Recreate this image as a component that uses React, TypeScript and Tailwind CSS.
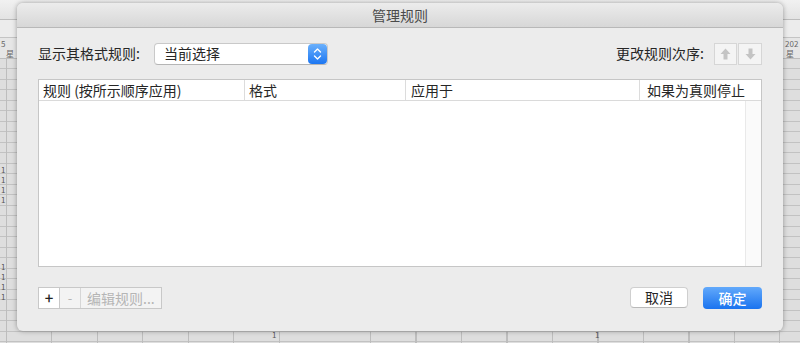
import React from "react";

const ArrowUp = () => (
  <svg width="11" height="12" viewBox="0 0 11 12">
    <path d="M5.5 0.5 L10.5 6 L7.5 6 L7.5 11.5 L3.5 11.5 L3.5 6 L0.5 6 Z" fill="#c4c4c4" />
  </svg>
);
const ArrowDown = () => (
  <svg width="11" height="12" viewBox="0 0 11 12">
    <path d="M5.5 11.5 L10.5 6 L7.5 6 L7.5 0.5 L3.5 0.5 L3.5 6 L0.5 6 Z" fill="#c4c4c4" />
  </svg>
);

const Stepper = () => (
  <div className="w-[19px] h-[20px] rounded-[4px] bg-[linear-gradient(to_bottom,#6ab0fc,#1c76f2)] flex items-center justify-center">
    <svg width="9" height="14" viewBox="0 0 9 14">
      <path d="M1.5 5 L4.5 2 L7.5 5" stroke="white" strokeWidth="1.4" fill="none" strokeLinecap="round" strokeLinejoin="round" />
      <path d="M1.5 9 L4.5 12 L7.5 9" stroke="white" strokeWidth="1.4" fill="none" strokeLinecap="round" strokeLinejoin="round" />
    </svg>
  </div>
);

export default function App() {
  const leftOnes = [167, 177, 187, 197, 264, 274, 284, 294];
  return (
    <div className="relative w-[800px] h-[343px] overflow-hidden bg-[#e2e2e2] font-[family-name:'Noto_Sans_CJK_SC','Liberation_Sans',sans-serif]">
      {/* background spreadsheet */}
      <div className="flex flex-col h-full">
        <div className="h-[20px] bg-[linear-gradient(to_bottom,#f1f1f1,#e3e3e3)] border-b border-[#bcbcbc]" />
        <div className="h-[18px] bg-[#ececec] border-b border-[#c4c4c4]" />
        <div className="relative h-[21px] bg-[#e6e6e6] border-b border-[#bdbdbd] text-[8px] leading-[9px] text-[#666]">
          <span className="absolute left-[1px] top-[1px]">5</span>
          <span className="absolute left-[6px] top-[11px]">星</span>
          <span className="absolute left-[785px] top-[1px]">202</span>
          <span className="absolute left-[786px] top-[11px]">星</span>
        </div>
        <div className="relative flex-1 bg-[#dedede] bg-[repeating-linear-gradient(to_bottom,transparent_0px,transparent_9.5px,#c2c2c2_9.5px,#c2c2c2_10.5px)]">
          <div className="absolute inset-0 bg-[repeating-linear-gradient(to_right,transparent_0px,transparent_6px,#bdbdbd_6px,#bdbdbd_7px,transparent_7px,transparent_45.5px)]" />
          {leftOnes.map((y) => (
            <span key={y} className="absolute left-[1px] text-[8px] leading-[8px] text-[#555]" style={{ top: y - 60 }}>
              1
            </span>
          ))}
          <span className="absolute left-[272px] top-[272px] text-[8px] leading-[8px] text-[#555]">1</span>
          <span className="absolute left-[595px] top-[272px] text-[8px] leading-[8px] text-[#555]">1</span>
        </div>
      </div>

      {/* dialog */}
      <div className="absolute left-[17px] top-[3px] w-[766px] h-[328px] rounded-[6px] overflow-hidden bg-[#ececec] shadow-[0_0_5px_rgba(0,0,0,0.35)] flex flex-col">
        <div className="h-[25px] shrink-0 bg-[linear-gradient(to_bottom,#ececec,#d7d7d7)] border-b border-[#b8b8b8] flex items-center justify-center text-[14px] text-[#4a4a4a]">
          管理规则
        </div>
        <div className="flex-1 flex flex-col px-[21px] pt-[14px] text-[14px] text-[#262626]">
          <div className="h-[23px] flex items-center">
            <div className="flex items-center gap-[14px]">
              <span>显示其格式规则:</span>
              <div className="w-[174px] h-[22px] rounded-[4px] bg-white border border-[#c9c9c9] border-b-[#b5b5b5] flex items-center justify-between pl-[9px] pr-[0px]">
                <span>当前选择</span>
                <Stepper />
              </div>
            </div>
            <div className="ml-auto flex items-center gap-[10px]">
              <span>更改规则次序:</span>
              <div className="flex gap-[1px]">
                <div className="w-[23px] h-[22px] bg-[#f4f4f4] border border-[#d6d6d6] flex items-center justify-center">
                  <ArrowUp />
                </div>
                <div className="w-[24px] h-[22px] bg-[#f4f4f4] border border-[#d6d6d6] flex items-center justify-center">
                  <ArrowDown />
                </div>
              </div>
            </div>
          </div>

          <div className="mt-[14px] h-[188px] border border-[#c6c6c6] bg-white flex flex-col">
            <div className="h-[21px] shrink-0 flex border-b border-[#dadada] leading-[20px]">
              <div className="w-[206px] pl-[4px] border-r border-[#dcdcdc]">规则 (按所示顺序应用)</div>
              <div className="w-[161px] pl-[4px] border-r border-[#dcdcdc]">格式</div>
              <div className="w-[234px] pl-[5px] border-r border-[#dcdcdc]">应用于</div>
              <div className="flex-1 pl-[7px]">如果为真则停止</div>
            </div>
            <div className="flex-1 flex">
              <div className="flex-1" />
              <div className="w-[16px] bg-[#fafafa] border-l border-[#e9e9e9]" />
            </div>
          </div>

          <div className="mt-[20px] flex items-center">
            <div className="flex h-[22px] border border-[#c8c8c8] bg-[#f3f3f3]">
              <div className="w-[21px] bg-white border-r border-[#c8c8c8] flex items-center justify-center text-[15px] font-medium text-[#222]">
                +
              </div>
              <div className="w-[21px] border-r border-[#d6d6d6] flex items-center justify-center text-[13px] text-[#b5b5b5]">
                -
              </div>
              <div className="w-[80px] flex items-center pl-[6px] text-[#b5b5b5]">编辑规则...</div>
            </div>
            <div className="ml-auto flex gap-[15px]">
              <div className="w-[58px] h-[21px] rounded-[4px] bg-white border border-[#cfcfcf] border-b-[#b9b9b9] flex items-center justify-center">
                取消
              </div>
              <div className="w-[59px] h-[22px] rounded-[4px] bg-[linear-gradient(to_bottom,#62a9fb,#1a73ef)] text-white font-medium flex items-center justify-center">
                确定
              </div>
            </div>
          </div>
        </div>
      </div>
    </div>
  );
}
